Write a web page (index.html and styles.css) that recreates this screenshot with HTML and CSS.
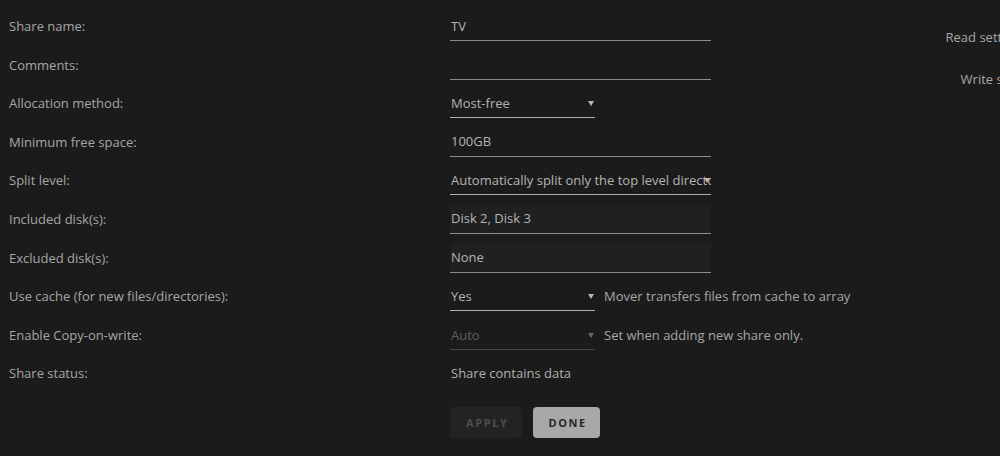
FILE: index.html
```html
<!DOCTYPE html>
<html lang="en">
  <head>
    <meta charset="UTF-8" />
    <meta name="viewport" content="width=device-width, initial-scale=1.0" />
    <title>Share Settings</title>
    <link rel="stylesheet" href="styles.css">
  </head>
  <body>
    <div class="page">
      <form class="share-form">
        <div class="row">
          <label>Share name:</label>
          <input type="text" class="field" value="TV" />
        </div>
        <div class="row">
          <label>Comments:</label>
          <input type="text" class="field" value="" />
        </div>
        <div class="row">
          <label>Allocation method:</label>
          <div class="select">Most-free</div>
        </div>
        <div class="row">
          <label>Minimum free space:</label>
          <input type="text" class="field" value="100GB" />
        </div>
        <div class="row">
          <label>Split level:</label>
          <div class="select wide">Automatically split only the top level directory as required</div>
        </div>
        <div class="row">
          <label>Included disk(s):</label>
          <input type="text" class="field shaded" value="Disk 2, Disk 3" />
        </div>
        <div class="row">
          <label>Excluded disk(s):</label>
          <input type="text" class="field shaded" value="None" />
        </div>
        <div class="row">
          <label>Use cache (for new files/directories):</label>
          <div class="select">Yes</div>
          <span class="note">Mover transfers files from cache to array</span>
        </div>
        <div class="row">
          <label>Enable Copy-on-write:</label>
          <div class="select disabled">Auto</div>
          <span class="note">Set when adding new share only.</span>
        </div>
        <div class="row">
          <label>Share status:</label>
          <span class="status">Share contains data</span>
        </div>
        <div class="row buttons">
          <label></label>
          <button type="button" class="btn" disabled>Apply</button>
          <button type="button" class="btn primary">Done</button>
        </div>
      </form>

      <!-- Clone settings column, cut off by the window -->
      <div class="clone">
        <p>Read settings from:</p>
        <p>Write settings to:</p>
      </div>
    </div>
  </body>
</html>
```

FILE: styles.css
```css
/* Basic page styling */
body {
  margin: 0;
  background-color: #1c1b1b;
  color: #a6a6a6;
  font-family: "Open Sans", "Noto Sans", sans-serif;
  font-size: 13px;
  overflow: hidden;
}

.page {
  display: flex;
  padding: 11px 0 0 9px;
  width: 1200px;
}

/* Form rows */
.share-form {
  width: 934px;
  flex-shrink: 0;
}

.row {
  display: flex;
  align-items: center;
  height: 30px;
  margin-bottom: 8.6px;
}

.row label {
  width: 441px;
  flex-shrink: 0;
}

.field {
  box-sizing: border-box;
  width: 261px;
  height: 30px;
  padding: 0 1px;
  border: 0;
  border-bottom: 1px solid #8c8c8c;
  background: transparent;
  color: #b4b4b4;
  font: inherit;
  outline: none;
}

.field.shaded {
  background-color: #202020;
}

/* Fake select boxes */
.select {
  box-sizing: border-box;
  position: relative;
  width: 145px;
  height: 30px;
  line-height: 30px;
  padding: 0 12px 0 1px;
  border-bottom: 1px solid #b0b0b0;
  color: #b4b4b4;
  white-space: nowrap;
  overflow: hidden;
}

.select::after {
  content: "";
  position: absolute;
  right: 1px;
  top: 13px;
  border-left: 3px solid transparent;
  border-right: 3px solid transparent;
  border-top: 5px solid #b8b8b8;
}

.select.wide {
  width: 261px;
}

.select.disabled {
  color: #5e5e5e;
  border-bottom-color: #444;
}

.select.disabled::after {
  border-top-color: #666;
}

.note {
  margin-left: 9px;
  color: #a6a6a6;
}

.status {
  padding-left: 1px;
  color: #b0b0b0;
}

/* Buttons */
.buttons {
  margin-top: 19px;
  height: 31px;
}

.btn {
  height: 31px;
  padding: 0 14px 0 16px;
  margin-right: 11px;
  border: 0;
  border-radius: 4px;
  background-color: #232323;
  color: #4e4e4e;
  font-family: inherit;
  font-size: 11px;
  font-weight: bold;
  letter-spacing: 1.6px;
  text-transform: uppercase;
}

.btn.primary {
  padding: 0 13px 0 15px;
  background-color: #a8a8a8;
  color: #262626;
}

/* Clone column */
.clone {
  width: 120px;
  text-align: right;
  padding-top: 17px;
}

.clone p {
  margin: 0 0 24px;
  white-space: nowrap;
}
```
